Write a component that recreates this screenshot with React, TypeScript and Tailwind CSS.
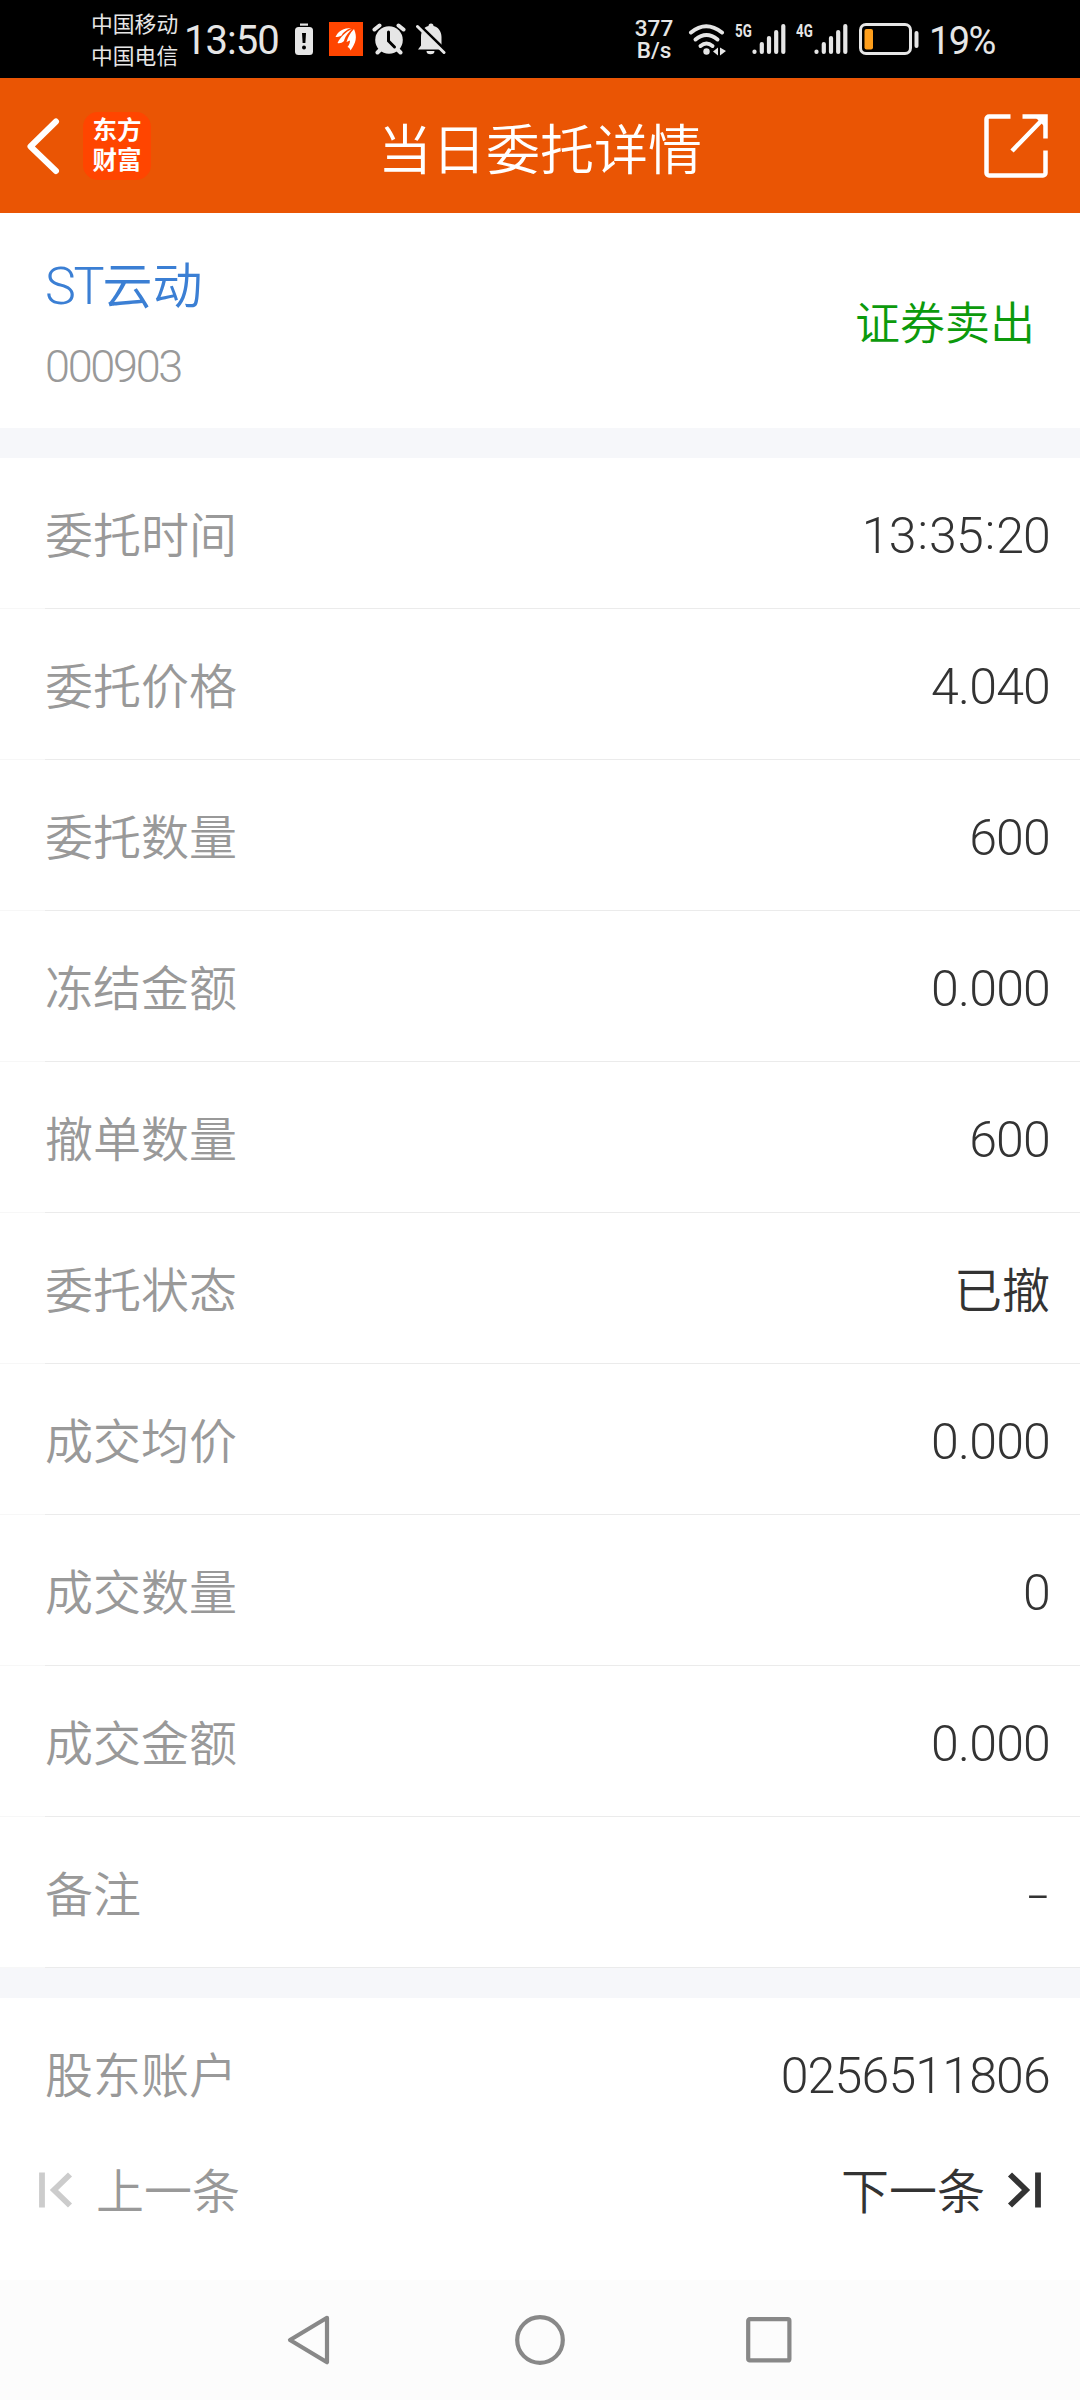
import React from "react";

interface DetailRow {
  label: string;
  value: React.ReactNode;
  cjk?: boolean;
}

const rows: DetailRow[] = [
  { label: "委托时间", value: <TimeValue value="13:35:20" /> },
  { label: "委托价格", value: "4.040" },
  { label: "委托数量", value: "600" },
  { label: "冻结金额", value: "0.000" },
  { label: "撤单数量", value: "600" },
  { label: "委托状态", value: "已撤", cjk: true },
  { label: "成交均价", value: "0.000" },
  { label: "成交数量", value: "0" },
  { label: "成交金额", value: "0.000" },
  {
    label: "备注",
    value: <span className="mr-0.5 inline-block origin-right scale-x-[1.5]">-</span>,
  },
];

// Colons sit slightly above the baseline, with a little air on both sides.
function TimeValue({ value }: { value: string }) {
  return (
    <>
      {value.split(":").map((part, i) => (
        <React.Fragment key={i}>
          {i > 0 && (
            <span className="inline-block -translate-y-1 px-[1.8px]">:</span>
          )}
          {part}
        </React.Fragment>
      ))}
    </>
  );
}

function SignalBars() {
  return (
    <svg width="34" height="32" viewBox="0 0 34 32" className="shrink-0">
      <g stroke="#e6e6e6" strokeWidth="4.2" strokeLinecap="round">
        <path d="M2.5 28.5v.5M9.8 21v8M17 15v14M24.2 9v20M31.3 3v26" />
      </g>
    </svg>
  );
}

function StatusBar() {
  return (
    <div className="flex h-[78px] items-center justify-between bg-black pr-[84px] pl-[91px] text-[#e6e6e6]">
      <div className="flex items-center">
        <div className="w-[88px] pt-[3px] text-[21.8px] leading-[32px] whitespace-nowrap">
          <div>中国移动</div>
          <div>中国电信</div>
        </div>
        <div className="ml-[5px] w-[111px] pt-1 text-[40px] leading-none tracking-[-1px]">
          13:50
        </div>
        <svg width="18" height="33" viewBox="0 0 18 33">
          <rect x="5" y="0.5" width="8" height="2.2" fill="#e6e6e6" />
          <rect y="4" width="18" height="28" rx="3.5" fill="#e6e6e6" />
          <path d="M7 10h4l-.6 10H7.6z" fill="#000" />
          <circle cx="9" cy="24.5" r="2" fill="#000" />
        </svg>
        <svg width="34" height="34" viewBox="0 0 34 34" className="ml-4">
          <rect width="34" height="34" fill="#ff4500" />
          <g fill="#fff">
            <path d="M6.5 15C9 9 15 6 22 6c-5 2-8 4.5-9.5 7.5-2 1.5-4 1.5-6 1.5z" />
            <path d="M8.5 21c3-6 8-11 14.5-14-5 5-7 8-8 12-2 2-4.5 2.5-6.5 2z" />
            <path d="M25 7c3.5 8 2 14-3.5 21.5-.5-2-1.5-3-3-3.5 2-2.5 2.5-4.5 2.5-6.5l-3.5 1.5c1.5-5 3.5-9 7.500-13z" />
          </g>
        </svg>
        <svg width="34" height="32" viewBox="0 0 34 32" className="ml-[9px]">
          <circle cx="17" cy="17" r="13.8" fill="#e6e6e6" />
          <path d="M2.5 6.5l5-4M31.5 6.5l-5-4M5.5 29.5l3-3M28.5 29.5l-3-3" stroke="#e6e6e6" strokeWidth="4" strokeLinecap="round" />
          <path d="M16.5 9v9l6 6" fill="none" stroke="#000" strokeWidth="3" strokeLinecap="round" />
        </svg>
        <svg width="31" height="32" viewBox="0 0 31 32" className="ml-[10px]">
          <path d="M2 26.5l3-4V14C5 8 8 4 12.5 3a2.5 2.5 0 015 0C22 4 25.5 8 25.5 14v8.5l3 4z" fill="#e6e6e6" />
          <path d="M10.5 28h8a4 3.2 0 01-8 0z" fill="#e6e6e6" />
          <path d="M1 .5l30 29" stroke="#000" strokeWidth="4" />
          <path d="M1.5 3.5l26.5 26" stroke="#e6e6e6" strokeWidth="3" strokeLinecap="round" />
        </svg>
      </div>

      <div className="flex items-center">
        <div className="w-[40px] text-center text-[22.5px] leading-[22px] font-medium">
          <div>377</div>
          <div>B/s</div>
        </div>
        <svg width="40" height="34" viewBox="0 0 40 34" className="ml-[14px]">
          <g fill="none" stroke="#e6e6e6" strokeWidth="4" strokeLinecap="round">
            <path d="M3 10.5q15-12.5 31 0" />
            <path d="M7.5 17.5q11-9 22 0" />
            <path d="M12.5 24q6-5 12 0" />
          </g>
          <circle cx="18.5" cy="29.5" r="3.2" fill="#e6e6e6" />
          <path d="M25 29.5l5-4v8zM32 25.5l6 3.5-6 4.5z" fill="#e6e6e6" />
        </svg>
        <div className="mb-[18px] ml-[7px] w-[17px] origin-left scale-x-[0.7] text-[19px] leading-none font-bold">
          5G
        </div>
        <SignalBars />
        <div className="mb-[18px] ml-[10px] w-[18px] origin-left scale-x-[0.7] text-[19px] leading-none font-bold">
          4G
        </div>
        <SignalBars />
        <svg width="60" height="32" viewBox="0 0 60 32" className="ml-[11px]">
          <rect x="1.5" y="1.5" width="50" height="29" rx="5.5" fill="none" stroke="#e6e6e6" strokeWidth="3" />
          <rect x="5.5" y="6" width="8.5" height="20.5" rx="2" fill="#ff9f1c" />
          <rect x="55.5" y="8" width="4" height="17" rx="2" fill="#e6e6e6" />
        </svg>
        <div className="ml-[10px] w-[67px] pt-1 text-[38px] leading-none tracking-[-1.6px] whitespace-nowrap">
          19%
        </div>
      </div>
    </div>
  );
}

function Header() {
  return (
    <header className="relative flex h-[135px] items-center justify-between bg-[#ea5504] pr-8 pl-[25px] text-white">
      <div className="flex items-center">
        <svg width="36" height="58" viewBox="0 0 36 58">
          <path d="M31 4.5L5.5 29.5L31 54" fill="none" stroke="#fff" strokeWidth="6" strokeLinecap="round" strokeLinejoin="round" />
        </svg>
        <div className="ml-[22px] flex h-[68px] w-[68px] flex-col items-center justify-center rounded-[15px] bg-[#ff4500] text-[24.5px] leading-[29.5px] font-bold">
          <span>东方</span>
          <span>财富</span>
        </div>
      </div>
      <h1 className="absolute inset-x-0 pt-[13px] text-center text-[54px] leading-none font-[350]">
        当日委托详情
      </h1>
      <svg width="64" height="64" viewBox="0 0 64 64">
        <g fill="none" stroke="#fff" strokeWidth="4.5">
          <path d="M26.5 2.5H5a2.5 2.5 0 00-2.5 2.5V59A2.5 2.5 0 005 61.5H59A2.5 2.5 0 0061.5 59V36.5" />
          <path d="M38.5 2.5H61.5V24.5M60 4L28 37" />
        </g>
        <path d="M52 4h10v10z" fill="#fff" />
      </svg>
    </header>
  );
}

function RowContent({ label, value, cjk }: DetailRow) {
  return (
    <div className="flex h-[150px] items-center justify-between pt-1.5 pr-[30px] pl-[45px]">
      <span className="pt-px text-[48px] text-[#999]">{label}</span>
      <span
        className={
          cjk
            ? "pt-px text-[48px] text-[#333]"
            : "text-[50px] tracking-[-0.8px] text-[#333]"
        }
      >
        {value}
      </span>
    </div>
  );
}

export default function App() {
  return (
    <div className="flex h-[2400px] w-[1080px] flex-col overflow-hidden bg-white font-[Roboto,'Noto_Sans_CJK_SC',sans-serif]">
      <StatusBar />
      <Header />

      <section className="flex h-[215px] items-center justify-between px-[45px] font-[350]">
        <div className="flex flex-col pt-[17px]">
          <div className="text-[50px] leading-[72px] text-[#3b7fd4]">
            <span className="text-[52px] tracking-[-2.2px]">ST</span>云动
          </div>
          <div className="mt-1 text-[45px] leading-[80px] tracking-[-2.3px] text-[#999]">
            000903
          </div>
        </div>
        <div className="pt-[9px] text-[45px] text-[#0c9a0c]">证券卖出</div>
      </section>

      <div className="h-[30px] bg-[#f6f7fa]" />

      <section className="font-[350]">
        {rows.map((row) => (
          <div key={row.label}>
            <RowContent {...row} />
            <div className="flex h-px">
              <div className="w-[45px] bg-[#f7f7f7]" />
              <div className="flex-1 bg-[#ebebeb]" />
            </div>
          </div>
        ))}
      </section>

      <div className="h-[30px] bg-[#f6f7fa]" />

      <section className="flex h-[282px] flex-col font-[350]">
        <RowContent label="股东账户" value="0256511806" />
        <div className="flex h-[84px] items-center justify-between px-[38px] text-[48px]">
          <button className="flex items-center gap-[22px] text-[#999]">
            <svg width="36" height="38" viewBox="0 0 36 38">
              <path d="M4 1.5v35M32 3.5L16 19l16 15.5" fill="none" stroke="#ccc" strokeWidth="5.8" />
            </svg>
            <span className="pt-1.5">上一条</span>
          </button>
          <button className="flex items-center gap-[21px] text-[#333]">
            <span className="pt-1.5">下一条</span>
            <svg width="36" height="38" viewBox="0 0 36 38">
              <path d="M32 1.5v35M4 3.5L20 19L4 34.5" fill="none" stroke="#333" strokeWidth="5.8" />
            </svg>
          </button>
        </div>
      </section>

      <nav className="flex h-[120px] items-center justify-center gap-[180px] bg-[#fcfcfc]">
        <svg width="50" height="52" viewBox="0 0 50 52">
          <path d="M42 3.8L5 26l37 22.2z" fill="none" stroke="#888" strokeWidth="4.2" strokeLinejoin="round" />
        </svg>
        <svg width="50" height="52" viewBox="0 0 50 52">
          <circle cx="25" cy="26" r="22.8" fill="none" stroke="#888" strokeWidth="4.2" />
        </svg>
        <svg width="50" height="52" viewBox="0 0 50 52">
          <rect x="3.2" y="5.2" width="41.2" height="41.2" rx="1.5" fill="none" stroke="#888" strokeWidth="4.2" />
        </svg>
      </nav>
    </div>
  );
}
